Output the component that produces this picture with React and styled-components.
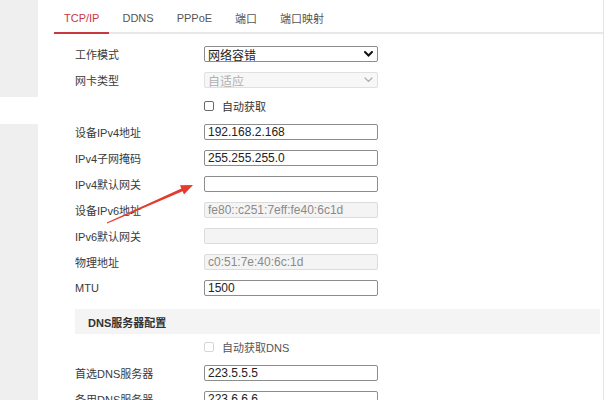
import React from 'react';
import styled, { createGlobalStyle } from 'styled-components';

const Global = createGlobalStyle`
  html, body { margin: 0; padding: 0; background: #fff; }
  body { font-family: "Liberation Sans", "Noto Sans CJK SC", Arial, sans-serif; }
  * { box-sizing: border-box; }
`;

const Page = styled.div`
  position: relative;
  display: flex;
  width: 608px;
  height: 400px;
  overflow: hidden;
  background: #fff;
`;

const Sidebar = styled.div`
  width: 38px;
  flex: none;
  display: flex;
  flex-direction: column;
`;

const SideBlock = styled.div`
  height: ${p => (p.$h ? `${p.$h}px` : 'auto')};
  flex: ${p => (p.$h ? 'none' : '1')};
  background: ${p => (p.$active ? '#fff' : '#efefef')};
`;

const Main = styled.div`
  width: 566px;
  flex: none;
  border-right: 1px solid #e4e4e4;
  display: flex;
  flex-direction: column;
`;

const Tabs = styled.div`
  flex: none;
  height: 34px;
  margin-left: 16px;
  display: flex;
  gap: 3px;
  border-bottom: 2px solid #e8e8e8;
`;

const Tab = styled.div`
  padding: 4px 10px 0;
  display: flex;
  align-items: center;
  font-size: 11px;
  color: ${p => (p.$active ? '#c8383f' : '#555')};
  border-bottom: 2px solid ${p => (p.$active ? '#c8383f' : 'transparent')};
  margin-bottom: -2px;
`;

const Form = styled.div`
  flex: none;
  padding: 7px 0 0 37px;
  display: flex;
  flex-direction: column;
`;

const Row = styled.div`
  flex: none;
  height: 26px;
  display: flex;
  align-items: center;
`;

const Label = styled.div`
  width: 129px;
  flex: none;
  font-size: 11px;
  color: #3a3a3a;
`;

const Input = styled.input`
  width: 174px;
  height: 16px;
  padding: 0 3px;
  font-family: "Liberation Sans", Arial, sans-serif;
  font-size: 12px;
  color: ${p => (p.disabled ? '#8a8a8a' : '#222')};
  background: ${p => (p.disabled ? '#f4f4f4' : '#fff')};
  border: 1px solid ${p => (p.disabled ? '#dcdcdc' : '#8d8d8d')};
  border-radius: 2px;
  outline: none;
  margin: 0;
`;

const Select = styled.div`
  width: 174px;
  height: 16px;
  padding: 0 4px 0 3px;
  display: flex;
  align-items: center;
  justify-content: space-between;
  font-size: 12px;
  color: ${p => (p.$disabled ? '#b0b0b0' : '#222')};
  background: ${p => (p.$disabled ? '#f7f7f7' : '#fff')};
  border: 1px solid ${p => (p.$disabled ? '#e0e0e0' : '#8d8d8d')};
  border-radius: 2px;
`;

const Check = styled.label`
  display: flex;
  align-items: center;
  gap: 8px;
  font-size: 11px;
  color: ${p => (p.$disabled ? '#555' : '#333')};
`;

const Box = styled.span`
  width: 10px;
  height: 10px;
  border: 1px solid ${p => (p.$disabled ? '#d6d6d6' : '#6a6a6a')};
  border-radius: 2px;
  background: #fff;
`;

const Section = styled.div`
  flex: none;
  margin-top: 8px;
  height: 25px;
  width: 525px;
  background: #f4f4f4;
  display: flex;
  align-items: center;
  padding-left: 13px;
  font-size: 11px;
  font-weight: bold;
  color: #333;
`;

const Overlay = styled.svg`
  position: absolute;
  left: 0;
  top: 0;
  pointer-events: none;
`;

const Chevron = ({ color, w }) => (
  <svg width="9" height="6" viewBox="0 0 9 6">
    <path d="M1 1l3.5 3.5L8 1" fill="none" stroke={color} strokeWidth={w} strokeLinecap="round" />
  </svg>
);

const Field = ({ label, value, disabled }) => (
  <Row>
    <Label>{label}</Label>
    <Input readOnly value={value} disabled={disabled} />
  </Row>
);

export default function App() {
  return (
    <Page>
      <Global />
      <Sidebar>
        <SideBlock $h={97} />
        <SideBlock $h={27} $active />
        <SideBlock />
      </Sidebar>
      <Main>
        <Tabs>
          <Tab $active>TCP/IP</Tab>
          <Tab>DDNS</Tab>
          <Tab>PPPoE</Tab>
          <Tab>端口</Tab>
          <Tab>端口映射</Tab>
        </Tabs>
        <Form>
          <Row>
            <Label>工作模式</Label>
            <Select>
              <span>网络容错</span>
              <Chevron color="#111" w={2} />
            </Select>
          </Row>
          <Row>
            <Label>网卡类型</Label>
            <Select $disabled>
              <span>自适应</span>
              <Chevron color="#aaa" w={1.2} />
            </Select>
          </Row>
          <Row>
            <Label />
            <Check>
              <Box />
              自动获取
            </Check>
          </Row>
          <Field label="设备IPv4地址" value="192.168.2.168" />
          <Field label="IPv4子网掩码" value="255.255.255.0" />
          <Field label="IPv4默认网关" value="" />
          <Field label="设备IPv6地址" value="fe80::c251:7eff:fe40:6c1d" disabled />
          <Field label="IPv6默认网关" value="" disabled />
          <Field label="物理地址" value="c0:51:7e:40:6c:1d" disabled />
          <Field label="MTU" value="1500" />
          <Section>DNS服务器配置</Section>
          <Row>
            <Label />
            <Check $disabled>
              <Box $disabled />
              自动获取DNS
            </Check>
          </Row>
          <Field label="首选DNS服务器" value="223.5.5.5" />
          <Field label="备用DNS服务器" value="223.6.6.6" />
        </Form>
      </Main>
      <Overlay width="608" height="400" viewBox="0 0 608 400">
        <polygon
          points="193,185 184,194.4 182.6,191.2 107.2,223.6 106.8,222.4 181.4,188.4 180,185.2"
          fill="#e63a2c"
        />
      </Overlay>
    </Page>
  );
}
